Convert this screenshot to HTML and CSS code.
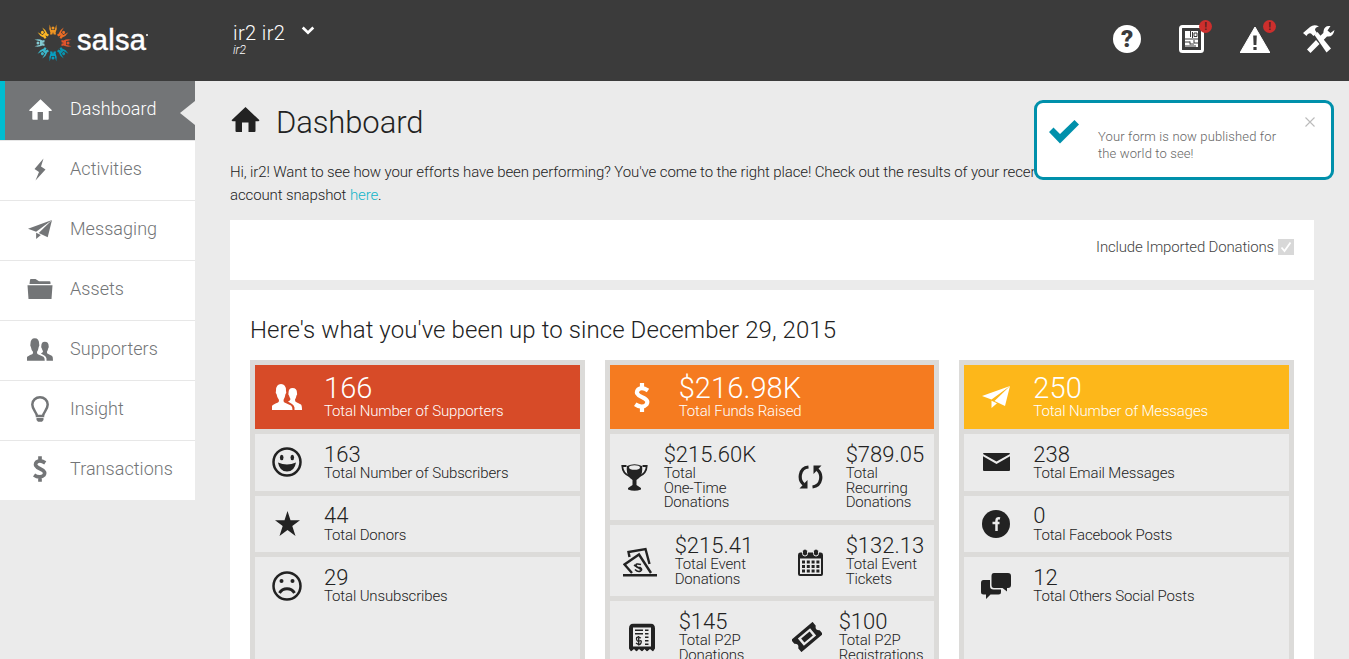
FILE: index.html
```html
<!DOCTYPE html>
<html lang="en">
<head>
<meta charset="utf-8">
<title>Dashboard</title>
<link rel="stylesheet" href="styles.css">
</head>
<body>
<svg class="defs" width="0" height="0">
  <symbol id="home" viewBox="0 0 28 25"><path d="M14 0 28 13.3 27 14.3H24V24Q24 25 23 25H17V15.500H10.500V25H5Q4 25 4 24V14.300H1L0 13.300Z"/></symbol>
  <symbol id="people" viewBox="0 0 30 26"><path d="M0 26V22Q.5 20.500 6 18.500Q7 18 7 16Q5 13.500 4.500 10Q3.300 9 4 6.500Q4 0 9 0Q14 0 14 6.500Q14.700 9 13.500 10Q13 13.500 11.500 16Q11.500 18 12.500 18.500L19 21.500Q20.500 22.500 20.500 26Z"/><path d="M16 17.500Q18.500 16.500 18.500 15Q17.500 13 17 11.500Q16 10.500 16.500 9Q16.500 4 20.500 4Q25 4 25 9Q25.500 10.500 24.500 11.500Q24 14 23 15.500Q23 17.500 24 18L29 20.500Q30 21.500 30 26H22.500V23.500Q22 21 20 20Z"/></symbol>
  <symbol id="plane" viewBox="0 0 28 22"><path d="M0 10 28 0 9.500 13.500Z"/><path d="M28 0 23 20 12.500 15Z"/><path d="M9.500 14.800 15 17.300 9.500 22Z"/></symbol>
  <symbol id="dollar" viewBox="0 0 16 29"><path d="M14 7.500Q8 3.500 4.200 6.500C1.600 9.500 3 12 8 14.200C14 16.800 14 19 12.500 21.500C10 24.500 5 24 1.200 21.300M8 0V5.500M8 23.500V29" fill="none" stroke="currentColor" stroke-width="4.200"/></symbol>
  <symbol id="face" viewBox="0 0 30 30"><circle cx="15" cy="15" r="13.500" fill="none" stroke="currentColor" stroke-width="2.500"/></symbol>
  <symbol id="note" viewBox="0 0 26 28"><path d="M5 0H21Q26 0 26 5V25L24 28 21 25.500 18 28 15.500 25.500 13 28 10 25.500 7.500 28 5 25.500 2 28 0 25V5Q0 0 5 0ZM4 4V23H22V4Z" fill-rule="evenodd"/><path d="M6 6H14V7.500H6ZM6 9.500H14V11H6ZM16 6H19.500V7.500H16ZM16 9.500H19.500V11H16ZM16 13H19.500V14.500H16ZM16 16.500H19.500V18H16ZM16 20H19.500V21.500H16Z"/></symbol>
</svg>

<header class="topbar">
  <div class="brand">
    <svg class="ring" viewBox="-20 -20 40 40">
      <defs><g id="dancer"><circle cy="-15" r="1.500"/><path d="M-3.300-18.500Q-4.500-14-2.600-10.500L-3-8.500H-.7L0-11 .7-8.500H3L2.600-10.500Q4.500-14 3.300-18.500L1.700-13H-1.700Z"/></g></defs>
      <use href="#dancer" fill="#ee9422"/>
      <use href="#dancer" fill="#ed6c25" transform="rotate(45)"/>
      <use href="#dancer" fill="#e0532b" transform="rotate(90)"/>
      <use href="#dancer" fill="#0795b0" transform="rotate(135)"/>
      <use href="#dancer" fill="#079fc2" transform="rotate(180)"/>
      <use href="#dancer" fill="#3ab7cb" transform="rotate(225)"/>
      <use href="#dancer" fill="#83cad2" transform="rotate(270)"/>
      <use href="#dancer" fill="#fbb625" transform="rotate(315)"/>
    </svg>
    <span class="brand-name">salsa</span><span class="brand-dot"></span>
  </div>
  <div class="account">
    <div class="account-name">ir2 ir2 <svg class="chevron" viewBox="0 0 13 9"><path d="M1.200 1.500 6.500 6.700 11.800 1.500" fill="none" stroke="#fff" stroke-width="2.700"/></svg></div>
    <div class="account-org">ir2</div>
  </div>
  <div class="tools">
    <div class="help">?</div>
    <div class="tool news">
      <svg width="25" height="28" viewBox="0 0 25 28"><rect x="1.500" y="1.500" width="22" height="25" rx="2" fill="none" stroke="#fff" stroke-width="3"/><path d="M6 6H19V22H6Z" fill="#fff"/><path d="M11.500 6V12M13.500 7V13M15 8H18V11.500H15ZM6 14H19M6 17H11M11 16.500V19.500M11 19H15M6 21H17M15 15V18H19" stroke="#3b3b3b" stroke-width="1" fill="none"/></svg>
      <span class="badge">!</span>
    </div>
    <div class="tool warn">
      <svg width="30" height="26" viewBox="0 0 30 26"><path d="M15 0 29.500 25V26H.5V25Z" fill="#fff" stroke="#fff" stroke-linejoin="round"/><path d="M13.200 8.500H16.800L16.400 18H13.600ZM13.400 20H16.600V23H13.400Z" fill="#3b3b3b"/></svg>
      <span class="badge">!</span>
    </div>
    <svg class="wrench" width="32" height="28" viewBox="0 0 32 28" fill="#fff"><path d="M0 8 7 2Q11-1 16 1.500Q12 2 12 5L14 8 10.500 11 8 8.500Q5 7.500 3.500 11Z"/><path d="M11.500 10 14.500 7 28 23.500 23.500 27.500Z"/><path d="M26 1Q21 1 20.500 6.500L20.300 8 15.500 12.500 19 16.500 24 11.500Q30 12.500 31.500 5L27.500 8 24.500 5.500 27.500 1Z"/><path d="M13 15 16.500 19 7.500 28 4 24.500Z"/></svg>
  </div>
</header>

<div class="body">
  <nav class="sidebar">
    <a class="nav active"><span class="nav-icon"><svg width="23" height="21"><use href="#home"/></svg></span>Dashboard</a>
    <a class="nav"><span class="nav-icon"><svg width="12" height="23" viewBox="0 0 12 23"><path d="M9.500 .5 .5 11 5 14 1.500 22.500 11.500 11.500 7 8.500Z"/></svg></span>Activities</a>
    <a class="nav"><span class="nav-icon"><svg width="24" height="19"><use href="#plane"/></svg></span>Messaging</a>
    <a class="nav"><span class="nav-icon"><svg width="26" height="20" viewBox="0 0 26 20"><path d="M2.500 5 3 1Q3 0 4 0H8.500L12 2.200H22.500Q23.500 2.200 23.500 3.500V5ZM.5 6.300H25.500L24.500 20H1.500Z"/></svg></span>Assets</a>
    <a class="nav"><span class="nav-icon"><svg width="26" height="23"><use href="#people"/></svg></span>Supporters</a>
    <a class="nav"><span class="nav-icon"><svg width="18" height="26" viewBox="0 0 18 26"><path d="M6 20C6 16.500 1.300 14 1.300 8.500C1.300 4 5 1.300 9 1.300S16.700 4 16.700 8.500C16.700 14 12 16.500 12 20Z" fill="none" stroke="currentColor" stroke-width="2.500"/><path d="M5.500 22H12.500V24L11 25.800H7L5.500 24Z"/></svg></span>Insight</a>
    <a class="nav"><span class="nav-icon"><svg width="14" height="26"><use href="#dollar"/></svg></span>Transactions</a>
  </nav>

  <main class="content">
    <h1 class="title"><svg width="29" height="25"><use href="#home"/></svg>Dashboard</h1>
    <p class="intro">Hi, ir2! Want to see how your efforts have been performing? You've come to the right place! Check out the results of your recent activity,<br>account snapshot <a class="link">here</a>.</p>
    <div class="filter">Include Imported Donations <span class="checkbox"><svg width="12" height="12" viewBox="0 0 12 12"><path d="M1.500 6.500 4.500 10 10.500 1.500" fill="none" stroke="#fff" stroke-width="1.800"/></svg></span></div>

    <section class="panel">
      <h2 class="panel-title">Here's what you've been up to since December 29, 2015</h2>
      <div class="columns">
        <div class="col">
          <div class="cell head red"><span class="ico"><svg width="30" height="26"><use href="#people"/></svg></span><div><div class="num">166</div><div class="lbl">Total Number of Supporters</div></div></div>
          <div class="cell r1"><span class="ico"><svg width="30" height="30" viewBox="0 0 30 30"><use href="#face"/><ellipse cx="9.700" cy="10.500" rx="1.800" ry="2.800"/><ellipse cx="20.300" cy="10.500" rx="1.800" ry="2.800"/><path d="M6 15.500Q15 19.500 24 15.500Q22.500 24.500 15 24.500T6 15.500Z"/></svg></span><div><div class="num">163</div><div class="lbl">Total Number of Subscribers</div></div></div>
          <div class="cell r2"><span class="ico"><svg width="25" height="25" viewBox="0 0 25 25"><path d="M12.500 0 15.500 9.300H25L17.300 15 20.500 25 12.500 19 4.500 25 7.700 15 0 9.300H9.500Z"/></svg></span><div><div class="num">44</div><div class="lbl">Total Donors</div></div></div>
          <div class="cell r3"><span class="ico"><svg width="30" height="30" viewBox="0 0 30 30"><use href="#face"/><circle cx="9.500" cy="10" r="2"/><circle cx="20.500" cy="10" r="2"/><path d="M7.500 22Q10 17.800 15 17.800T22.500 22" fill="none" stroke="currentColor" stroke-width="3"/></svg></span><div><div class="num">29</div><div class="lbl">Total Unsubscribes</div></div></div>
        </div>

        <div class="col">
          <div class="cell head orange"><span class="ico"><svg width="16" height="29"><use href="#dollar"/></svg></span><div><div class="num">$216.98K</div><div class="lbl">Total Funds Raised</div></div></div>
          <div class="cell pair p1">
            <span class="ico"><svg width="27" height="27" viewBox="0 0 27 27"><path d="M5.500 2H1.300Q1.500 9.500 9 12.500M21.500 2H25.700Q25.500 9.500 18 12.500" fill="none" stroke="currentColor" stroke-width="1.800"/><path d="M6 2Q13.500-1.500 21 2Q22.500 12 15.500 16V21L20 24V25.500Q13.500 28 7 25.500V24L11.500 21V16Q4.500 12 6 2Z"/><ellipse cx="13.500" cy="3.500" rx="5.500" ry="2.300" fill="#ebebeb"/></svg></span>
            <div><div class="num">$215.60K</div><div class="lbl">Total<br>One-Time<br>Donations</div></div>
            <span class="ico"><svg width="25" height="24" viewBox="0 0 25 24"><path d="M10.500 2C1 3 0 15 6 19.500M14.500 22C24 21 25 9 19 4.500" fill="none" stroke="currentColor" stroke-width="3.200"/><path d="M1.500 23.500 9.500 15 9.500 23.500ZM23.500.5 15.500 9V.5Z"/></svg></span>
            <div><div class="num">$789.05</div><div class="lbl">Total<br>Recurring<br>Donations</div></div>
          </div>
          <div class="cell pair p2">
            <span class="ico"><svg width="34" height="30" viewBox="0 0 34 30"><path d="M0 27H34V29.500H0Z"/><path d="M6.500 10 5.500 5 22.500 2 26.500 17M9 26 1.500 17.500 16 7.500 28 26" fill="none" stroke="currentColor" stroke-width="2.400"/><path d="M18 17.500Q12.500 16 13 18.500T17 20.500Q20 22.500 17.500 24T12 22.500M11 18 19 23" fill="none" stroke="currentColor" stroke-width="1.600"/></svg></span>
            <div><div class="num">$215.41</div><div class="lbl">Total Event<br>Donations</div></div>
            <span class="ico"><svg width="25" height="27" viewBox="0 0 25 27"><path d="M2 3.500H23Q25 3.500 25 6V25Q25 27 23 27H2Q0 27 0 25V6Q0 3.500 2 3.500ZM2 9.500V25H23V9.500Z" fill-rule="evenodd"/><rect x="4.500" y="0" width="5" height="7" rx="2.500" stroke="#ebebeb"/><rect x="15.500" y="0" width="5" height="7" rx="2.500" stroke="#ebebeb"/><path d="M4 13H21.500M4 17.500H21.500M4 22H21.500" stroke="currentColor" stroke-width="2.800" stroke-dasharray="3 1.800"/></svg></span>
            <div><div class="num">$132.13</div><div class="lbl">Total Event<br>Tickets</div></div>
          </div>
          <div class="cell pair p3">
            <span class="ico"><svg width="26" height="29" viewBox="0 0 26 28"><use href="#note" width="26" height="28"/><path d="M12 14.500Q7 12.500 7.500 15.500T10.500 17.500T12 19.500T7 19.500M9.700 12.500V22" fill="none" stroke="currentColor" stroke-width="1.300"/></svg></span>
            <div><div class="num">$145</div><div class="lbl">Total P2P<br>Donations</div></div>
            <span class="ico"><svg width="30" height="30" viewBox="0 0 30 30"><g transform="rotate(-40 15 15)"><path d="M1 7H29V12Q25 15 29 18V23H1V18Q5 15 1 12ZM7 10.300V19.700H23V10.300Z" fill-rule="evenodd"/><path d="M9.500 12.500H20.500V17.500H9.500Z"/></g></svg></span>
            <div><div class="num">$100</div><div class="lbl">Total P2P<br>Registrations</div></div>
          </div>
        </div>

        <div class="col">
          <div class="cell head yellow"><span class="ico"><svg width="28" height="22"><use href="#plane"/></svg></span><div><div class="num">250</div><div class="lbl">Total Number of Messages</div></div></div>
          <div class="cell r1"><span class="ico"><svg width="27" height="18" viewBox="0 0 27 18"><path d="M1 0H26Q27 0 27 1L13.500 8.500 0 1Q0 0 1 0ZM0 3.300 13.500 11 27 3.300V17Q27 18 26 18H1Q0 18 0 17Z"/></svg></span><div><div class="num">238</div><div class="lbl">Total Email Messages</div></div></div>
          <div class="cell r2"><span class="ico"><svg width="28" height="28" viewBox="0 0 28 28"><circle cx="14" cy="14" r="14"/><path d="M18 8.500Q14.500 7.500 14.500 11V21M10.500 13H17.500" fill="none" stroke="#ebebeb" stroke-width="2.500"/></svg></span><div><div class="num">0</div><div class="lbl">Total Facebook Posts</div></div></div>
          <div class="cell r3"><span class="ico"><svg width="30" height="26" viewBox="0 0 30 26"><path d="M13 0H27Q30 0 30 3V12Q30 15 27 15H26V18.500L21.500 15H13Q10.500 15 10.500 12V3Q10.500 0 13 0Z"/><path d="M2.500 7H9V13Q9 16.500 12.500 16.500H20V19Q20 21.500 17.500 21.500H9.500L5 26V21.500H2.500Q0 21.500 0 19V10Q0 7 2.500 7Z"/></svg></span><div><div class="num">12</div><div class="lbl">Total Others Social Posts</div></div></div>
        </div>
      </div>
    </section>
  </main>
</div>

<div class="toast">
  <svg class="toast-check" width="30" height="24" viewBox="0 0 30 24"><path d="M0 12 4.500 7.500 11 14 25.500 0 30 4.500 11 23.500Z" fill="#0090ab"/></svg>
  <p class="toast-text">Your form is now published for the world to see!</p>
  <svg class="toast-close" width="10" height="10" viewBox="0 0 10 10"><path d="M.5.500 9.500 9.500M9.500.500.500 9.500" stroke="#bbb" stroke-width="1.100"/></svg>
</div>
</body>
</html>
```
FILE: styles.css
```css
* { box-sizing: border-box; }
body {
  margin: 0;
  height: 659px;
  overflow: hidden;
  background: #ebebeb;
  color: #222;
  font-family: Roboto, sans-serif;
  font-weight: 300;
}
svg { display: block; fill: currentColor; }
.defs { position: absolute; }

.topbar {
  display: flex;
  height: 81px;
  background: #3b3b3b;
  color: #fff;
}
.brand { display: flex; width: 233px; padding: 23px 0 0 33px; }
.ring { width: 40px; height: 40px; }
.brand-name {
  margin: 0 0 0 4px;
  font: 400 29px/35px "Liberation Sans", sans-serif;
  letter-spacing: .3px;
  -webkit-text-stroke: .5px #fff;
}
.brand-dot { width: 2px; height: 2px; margin-top: 11px; background: #ccc; }
.account { padding-top: 21px; }
.account-name { display: flex; font-size: 20px; line-height: 24px; letter-spacing: .4px; }
.chevron { width: 14px; height: 9px; margin: 5px 0 0 16px; }
.account-org { font-size: 12px; line-height: 10px; font-style: italic; }
.tools { display: flex; margin-left: auto; padding: 25px 14px 0 0; }
.help {
  width: 28px; height: 28px;
  margin-right: 38px;
  border-radius: 50%;
  background: #fff;
  color: #3b3b3b;
  font-size: 24px; line-height: 29px; font-weight: 900;
  text-align: center;
}
.tool { position: relative; }
.news { margin-right: 36px; }
.warn { padding-top: 2px; margin-right: 33px; }
.badge {
  position: absolute;
  top: -5px; right: -8px;
  width: 13px; height: 13px;
  border-radius: 50%;
  background: #cc2f2d;
  color: #54201f;
  font-size: 10px; line-height: 13px; font-weight: 700;
  text-align: center;
}
.warn .badge { right: -6px; }

.body { display: flex; }
.sidebar { width: 195px; height: 419px; background: #fff; }
.nav {
  display: flex;
  align-items: center;
  height: 60px;
  padding-bottom: 4px;
  border-top: 1px solid #e7e7e7;
  color: #737577;
  font-size: 18px;
  letter-spacing: .05px;
}
.nav-icon { display: flex; justify-content: center; width: 80px; margin-right: -10px; padding-top: 1px; }
.active {
  position: relative;
  height: 59px;
  border-top: 0;
  border-left: 5px solid #00bcd0;
  background: #737577;
  color: #fff;
}
.active .nav-icon { width: 70px; margin-right: -5px; }
.active::after {
  content: "";
  position: absolute;
  right: 0; top: 20px;
  border: 12px solid transparent;
  border-width: 12px 15px 12px 0;
  border-right-color: #ebebeb;
}

.content { width: 1154px; padding: 21px 35px 0; }
.title {
  display: flex;
  gap: 14px;
  margin: 0;
  font-size: 31px; line-height: 41px; font-weight: 300;
  letter-spacing: -.1px;
}
.title svg { margin: 5px 2px 0 1px; }
.intro { margin: 18px 0 0; height: 59px; font-size: 15px; line-height: 23px; letter-spacing: -.115px; white-space: nowrap; }
.link { color: #11b5c9; }
.filter {
  display: flex;
  justify-content: flex-end;
  align-items: center;
  gap: 4px;
  height: 60px;
  padding: 0 20px 6px 0;
  background: #fff;
  color: #444;
  font-size: 15px;
  letter-spacing: -.17px;
}
.checkbox { display: block; width: 16px; height: 16px; padding: 2px; background: #d8d8d8; }
.panel { height: 500px; margin-top: 10px; padding: 20px; background: #fff; }
.panel-title { margin: 0 0 10px; font-size: 24px; line-height: 40px; font-weight: 300; letter-spacing: .08px; }
.columns { display: grid; grid-template-columns: repeat(3, 1fr); gap: 20px; }
.col { display: flex; flex-direction: column; gap: 5px; padding: 5px; background: #dcdbd9; }
.cell {
  display: grid;
  grid-template-columns: 64px 1fr;
  column-gap: 5px;
  align-items: start;
  padding-top: 10px;
  background: #ebebeb;
}
.ico { display: flex; align-items: center; justify-content: center; height: 36px; }
.num { font-size: 22px; line-height: 22px; }
.lbl { font-size: 15px; line-height: 14.6px; letter-spacing: -.15px; white-space: nowrap; }
.head { height: 64px; padding-top: 8px; color: #fff; }
.head .ico { height: 48px; }
.head .num { font-size: 29px; line-height: 30px; letter-spacing: .1px; }
.head .lbl { line-height: 16px; }
.red { background: #d74b28; }
.orange { background: #f57b20; }
.yellow { background: #fdb71a; }
.r1 { height: 57px; }
.r2 { height: 56px; }
.r2 .num { margin-top: -1px; margin-bottom: 1px; }
.r2 .ico { height: 35px; }
.r3 { height: 180px; }
.r3 .ico { height: 38px; }
.pair { column-gap: 0; }
.p1 { height: 86px; grid-template-columns: 54px 122px 60px 1fr; }
.p1 .ico { height: 66px; margin-right: 5px; }
.p1 .ico:nth-child(3), .p2 .ico:nth-child(3) { margin-right: 10px; }
.p2 { height: 71px; grid-template-columns: 65px 111px 60px 1fr; }
.p2 .ico { height: 54px; margin-right: 5px; }
.p3 { height: 160px; grid-template-columns: 69px 104px 56px 1fr; }
.p3 .ico { height: 52px; margin-right: 5px; }
.p3 .ico:nth-child(3) { margin-right: 8px; }

.toast {
  position: absolute;
  left: 1034px; top: 100px;
  display: flex;
  width: 300px; height: 80px;
  border: 3px solid #0090ab;
  border-radius: 9px;
  background: #fff;
}
.toast-check { margin: 17px 0 0 12px; }
.toast-text { width: 190px; margin: 25px 0 0 19px; color: #666; font-size: 13px; line-height: 17px; letter-spacing: .13px; }
.toast-close { margin: 14px 0 0 17px; }
```
